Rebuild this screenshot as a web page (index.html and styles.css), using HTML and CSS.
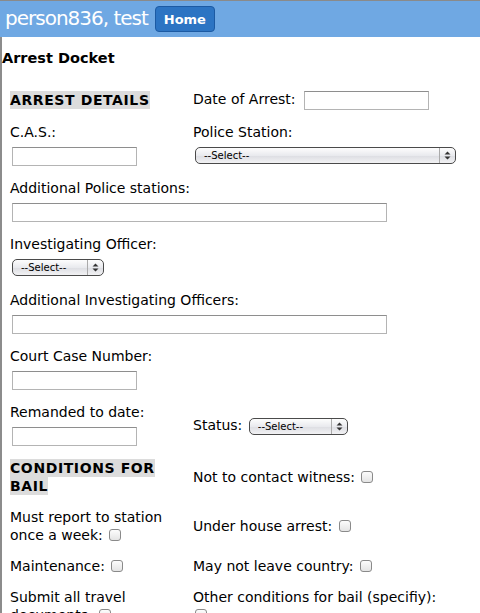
FILE: index.html
```html
<!DOCTYPE html>
<html>
<head>
<meta charset="utf-8">
<title>Arrest Docket</title>
<link rel="stylesheet" href="styles.css">
</head>
<body>
<div class="topbar">
  <span class="user">person836, test</span>
  <button class="home" type="button">Home</button>
</div>
<div class="page">
  <h1 class="title">Arrest Docket</h1>
  <form class="form">
    <div class="cell"><span class="section">ARREST DETAILS</span></div>
    <div class="cell">Date of Arrest: <input class="txt short inline" type="text"></div>

    <div class="cell"><label class="lbl">C.A.S.:</label><input class="txt short" type="text"></div>
    <div class="cell"><label class="lbl">Police Station:</label><span class="sel sel-station"><select><option>--Select--</option></select><svg class="arrows" width="7" height="9" viewBox="0 0 7 9"><path d="M0.5 3.5 L3.5 0.5 L6.5 3.5 Z M0.5 5.5 L3.5 8.5 L6.5 5.5 Z" fill="#333"/></svg></span></div>

    <div class="cell span2"><label class="lbl">Additional Police stations:</label><input class="txt wide" type="text"></div>

    <div class="cell span2"><label class="lbl">Investigating Officer:</label><span class="sel sel-officer"><select><option>--Select--</option></select><svg class="arrows" width="7" height="9" viewBox="0 0 7 9"><path d="M0.5 3.5 L3.5 0.5 L6.5 3.5 Z M0.5 5.5 L3.5 8.5 L6.5 5.5 Z" fill="#333"/></svg></span></div>

    <div class="cell span2"><label class="lbl">Additional Investigating Officers:</label><input class="txt wide" type="text"></div>

    <div class="cell span2"><label class="lbl">Court Case Number:</label><input class="txt short" type="text"></div>

    <div class="cell"><label class="lbl">Remanded to date:</label><input class="txt short" type="text"></div>
    <div class="cell status-cell">Status: <span class="sel sel-status"><select><option>--Select--</option></select><svg class="arrows" width="7" height="9" viewBox="0 0 7 9"><path d="M0.5 3.5 L3.5 0.5 L6.5 3.5 Z M0.5 5.5 L3.5 8.5 L6.5 5.5 Z" fill="#333"/></svg></span></div>

    <div class="cell"><span class="section">CONDITIONS FOR BAIL</span></div>
    <div class="cell">Not to contact witness: <input class="cb" type="checkbox"></div>

    <div class="cell">Must report to station once a week: <input class="cb" type="checkbox"></div>
    <div class="cell">Under house arrest: <input class="cb" type="checkbox"></div>

    <div class="cell">Maintenance: <input class="cb" type="checkbox"></div>
    <div class="cell">May not leave country: <input class="cb" type="checkbox"></div>

    <div class="cell">Submit all travel documents: <input class="cb" type="checkbox"></div>
    <div class="cell">Other conditions for bail (specifiy): <input class="cb" type="checkbox"></div>
  </form>
</div>
</body>
</html>
```

FILE: styles.css
```css
html, body {
  margin: 0;
  padding: 0;
  background: #fff;
}
body {
  font-family: "DejaVu Sans", Verdana, sans-serif;
  font-size: 14px;
  line-height: 18px;
  color: #000;
}
.topbar {
  height: 36px;
  border-top: 1px solid #8a8a8a;
  background: #6fa8e3;
  display: flex;
  align-items: center;
  padding-left: 5px;
  gap: 7px;
}
.user {
  color: #fff;
  font-size: 20px;
  letter-spacing: -1px;
  line-height: 24px;
  position: relative;
  top: -1px;
}
.home {
  font-family: "DejaVu Sans", Verdana, sans-serif;
  font-weight: bold;
  font-size: 13px;
  color: #fff;
  background: #2c74c3;
  border: 1px solid #1c5aa3;
  border-radius: 4px;
  width: 60px;
  height: 26px;
  padding: 0;
}
.page {
  border-left: 2px solid #8c8c8c;
  padding-bottom: 40px;
}
.title {
  margin: 0;
  padding: 11px 0 0 0;
  font-size: 14.5px;
  line-height: 20px;
  font-weight: bold;
}
.form {
  display: grid;
  grid-template-columns: 183px 258px;
  row-gap: 13px;
  align-items: center;
  margin: 22px 0 0 0;
  padding-left: 8px;
}
.span2 {
  grid-column: 1 / 3;
}
.status-cell {
  padding-top: 3px;
}
.section {
  background: #dcdcdc;
  font-weight: bold;
  letter-spacing: 0.6px;
  line-height: 18px;
  padding: 1px 0;
}
.lbl {
  display: block;
  margin-bottom: 6px;
}
.txt {
  display: block;
  box-sizing: border-box;
  height: 19px;
  margin: 0 0 0 2px;
  border: 1px solid #b4b4b4;
  border-top-color: #8e8e8e;
  background: #fff;
  padding: 0 3px;
  font-size: 12px;
}
.txt.inline {
  display: inline-block;
  vertical-align: middle;
  margin-left: 4px;
}
.short {
  width: 125px;
}
.wide {
  width: 375px;
}
.sel {
  position: relative;
  display: inline-block;
  vertical-align: middle;
  margin-left: 2px;
}
.lbl + .sel {
  display: block;
  width: fit-content;
  padding-bottom: 2px;
}
.sel select {
  -webkit-appearance: none;
  appearance: none;
  box-sizing: border-box;
  display: block;
  height: 17px;
  margin: 0;
  border: 1px solid #4a4a4a;
  border-radius: 5px;
  background: linear-gradient(#fdfdfd, #e9eaee 50%, #dcdde2 51%, #f2f2f4);
  font-family: "DejaVu Sans", Verdana, sans-serif;
  font-size: 10px;
  line-height: 15px;
  padding: 0 0 0 8px;
  color: #000;
}
.sel::before {
  content: "";
  position: absolute;
  top: 1px;
  height: 15px;
  right: 16px;
  width: 1px;
  background: #aaa;
}
.sel .arrows {
  position: absolute;
  right: 5px;
  top: 4px;
  pointer-events: none;
}
.sel-station select { width: 261px; }
.sel-officer select { width: 92px; }
.sel-status select { width: 99px; }
.cb {
  -webkit-appearance: none;
  appearance: none;
  box-sizing: border-box;
  width: 12px;
  height: 12px;
  margin: 0 0 0 2px;
  vertical-align: -1px;
  border: 1px solid #8a8a8a;
  border-radius: 3px;
  background: linear-gradient(#fcfcfc, #e4e4e4);
}
```
